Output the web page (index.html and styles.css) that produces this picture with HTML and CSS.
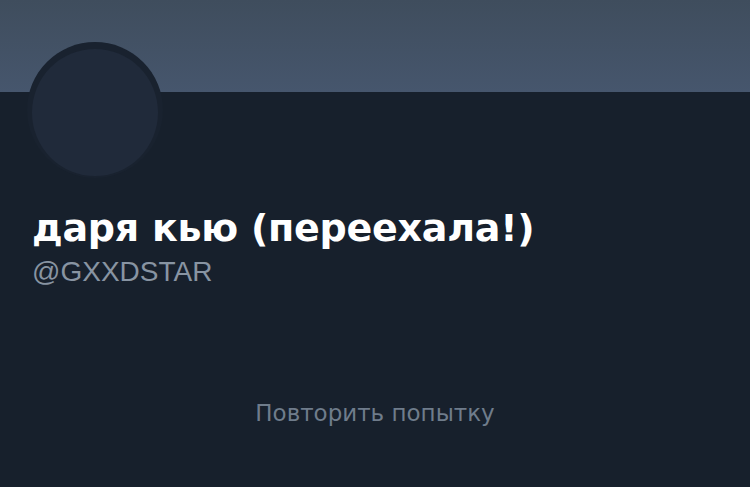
FILE: index.html
```html
<!DOCTYPE html>
<html lang="ru">
<head>
    <meta charset="UTF-8">
    <meta name="viewport" content="width=device-width, initial-scale=1.0">
    <title>даря кью (переехала!)</title>
    <link rel="stylesheet" href="styles.css">
</head>
<body>
    <div class="banner"></div>

    <div class="perfil">
        <div class="avatar">
            <div class="avatar-foto"></div>
        </div>
        <h1 class="nombre">даря кью (переехала!)</h1>
        <p class="usuario">@GXXDSTAR</p>
    </div>

    <div class="reintentar">
        <span>Повторить попытку</span>
    </div>
</body>
</html>
```

FILE: styles.css
```css
*{
    margin: 0;
    padding: 0;
    box-sizing: border-box;
}
body{
    background-color: #17202c;
    font-family: "Liberation Sans", Arial, sans-serif;
    width: 750px;
    height: 487px;
    overflow: hidden;
}
.banner{
    width: 100%;
    height: 92px;
    background: linear-gradient(#3f4d5d, #46566d);
}
/* Perfil */
.perfil{
    padding-left: 27px;
}
.avatar{
    width: 136px;
    height: 136px;
    margin-top: -50px;
    border-radius: 50%;
    background-color: #19222f;
    padding: 7px 5px 2px 5px;
}
.avatar-foto{
    width: 126px;
    height: 127px;
    border-radius: 50%;
    background-color: #202a3a;
}
.nombre{
    margin-top: 28px;
    margin-left: 5px;
    font-family: "DejaVu Sans", sans-serif;
    font-size: 38px;
    font-weight: 700;
    line-height: 44px;
    letter-spacing: -0.25px;
    color: #ffffff;
}
.usuario{
    margin-top: 5px;
    margin-left: 5px;
    font-size: 28px;
    line-height: 34px;
    color: #8894a2;
}
/* Boton de reintentar */
.reintentar{
    margin-top: 109px;
    display: flex;
    justify-content: center;
}
.reintentar span{
    font-family: "DejaVu Sans", sans-serif;
    font-size: 23px;
    line-height: 30px;
    color: #6f7c8b;
}
```
